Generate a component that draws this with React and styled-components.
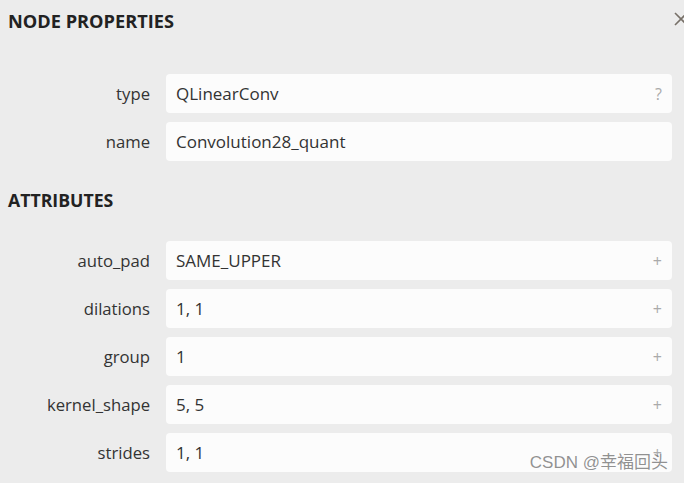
import styled, { createGlobalStyle } from "styled-components";

const Global = createGlobalStyle`
  html, body {
    margin: 0;
    padding: 0;
    background: #ececec;
  }
  body {
    font-family: "Open Sans", "Noto Sans CJK SC", sans-serif;
    color: #333;
  }
`;

const Panel = styled.div`
  width: 684px;
  height: 483px;
  position: relative;
  overflow: hidden;
  background: #ececec;
`;

const Header = styled.div`
  display: flex;
  justify-content: space-between;
  align-items: center;
  height: 42px;
  padding-left: 8px;
`;

const Title = styled.h2`
  margin: 0;
  font-size: 18.2px;
  font-weight: 700;
  color: #222;
`;

const Close = styled.svg`
  width: 16px;
  height: 16px;
  margin-right: -5px;
  margin-top: -4px;
  flex-shrink: 0;
`;

const Section = styled.div`
  display: flex;
  flex-direction: column;
  gap: 9px;
  padding: ${(p) => p.$pad};
`;

const Heading = styled.h3`
  margin: 16px 0 0;
  padding-left: 8px;
  height: 46px;
  display: flex;
  align-items: center;
  font-size: 17.7px;
  font-weight: 700;
  color: #222;
`;

const Row = styled.div`
  display: flex;
  align-items: center;
  height: 39px;
  padding-right: 12px;
`;

const Label = styled.div`
  width: 150px;
  text-align: right;
  font-size: 16.7px;
  color: #333;
  padding-right: 16px;
  flex-shrink: 0;
`;

const Value = styled.div`
  flex: 1;
  height: 39px;
  display: flex;
  align-items: center;
  justify-content: space-between;
  background: #fcfcfc;
  border-radius: 4px;
  padding: 0 10px;
  font-size: 17px;
  color: #333;
`;

const Hint = styled.span`
  color: #aaa;
  font-size: 16px;
  margin-right: 0;
`;

const Watermark = styled.div`
  position: absolute;
  right: 16px;
  bottom: 10px;
  font-family: "Liberation Sans", "Noto Sans CJK SC", sans-serif;
  font-size: 17px;
  color: rgba(110, 110, 110, 0.75);
`;

const props = [
  { name: "type", value: "QLinearConv", hint: "?" },
  { name: "name", value: "Convolution28_quant", hint: "" },
];

const attrs = [
  { name: "auto_pad", value: "SAME_UPPER" },
  { name: "dilations", value: "1, 1" },
  { name: "group", value: "1" },
  { name: "kernel_shape", value: "5, 5" },
  { name: "strides", value: "1, 1" },
];

const Field = ({ name, value, hint = "+" }) => (
  <Row>
    <Label>{name}</Label>
    <Value>
      <span>{value}</span>
      {hint ? <Hint>{hint}</Hint> : null}
    </Value>
  </Row>
);

const App = () => {
  return (
    <Panel>
      <Global />
      <Header>
        <Title>NODE PROPERTIES</Title>
        <Close viewBox="0 0 16 16">
          <path d="M2 2 L14 14 M14 2 L2 14" stroke="#777068" strokeWidth="1.6" fill="none" />
        </Close>
      </Header>
      <Section $pad="32px 0 0">
        {props.map((p) => (
          <Field key={p.name} {...p} />
        ))}
      </Section>
      <Heading>ATTRIBUTES</Heading>
      <Section $pad="18px 0 0">
        {attrs.map((a) => (
          <Field key={a.name} {...a} />
        ))}
      </Section>
      <Watermark>CSDN @幸福回头</Watermark>
    </Panel>
  );
};

export default App;
